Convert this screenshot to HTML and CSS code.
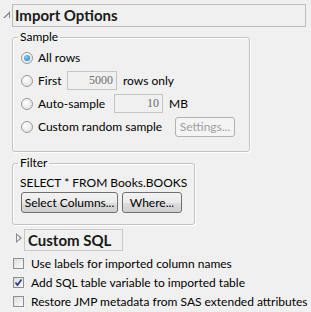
FILE: index.html
```html
<!DOCTYPE html>
<html lang="en">
<head>
    <meta charset="UTF-8">
    <title>Import Options</title>
    <link rel="stylesheet" href="styles.css">
</head>
<body>
    <div class="panel">
        <div class="outline-head">
            <span class="tri-open"></span>
            <div class="title-box">Import Options</div>
        </div>
        <div class="outline-body">
            <fieldset class="group sample">
                <legend>Sample</legend>
                <div class="row">
                    <span class="radio on"></span>
                    <span class="lbl">All rows</span>
                </div>
                <div class="row">
                    <span class="radio"></span>
                    <span class="lbl lbl-first">First</span>
                    <span class="num first-num">5000</span>
                    <span class="lbl">rows only</span>
                </div>
                <div class="row">
                    <span class="radio"></span>
                    <span class="lbl lbl-auto">Auto-sample</span>
                    <span class="num auto-num">10</span>
                    <span class="lbl">MB</span>
                </div>
                <div class="row">
                    <span class="radio"></span>
                    <span class="lbl lbl-custom">Custom random sample</span>
                    <span class="btn disabled">Settings...</span>
                </div>
            </fieldset>

            <fieldset class="group filter">
                <legend>Filter</legend>
                <div class="sql-text">SELECT * FROM Books.BOOKS</div>
                <div class="btn-row">
                    <span class="btn btn-cols">Select Columns...</span>
                    <span class="btn btn-where">Where...</span>
                </div>
            </fieldset>

            <div class="sub-head">
                <span class="tri-closed"></span>
                <div class="sub-box">Custom SQL</div>
            </div>

            <div class="checks">
                <div class="check-row">
                    <span class="check"></span>
                    <span class="lbl">Use labels for imported column names</span>
                </div>
                <div class="check-row">
                    <span class="check">
                        <svg width="9" height="9" viewBox="0 0 9 9"><path d="M1.5 4.5 L3.5 7 L7.5 1.5" fill="none" stroke="#2b3d8c" stroke-width="1.7"/></svg>
                    </span>
                    <span class="lbl">Add SQL table variable to imported table</span>
                </div>
                <div class="check-row">
                    <span class="check"></span>
                    <span class="lbl">Restore JMP metadata from SAS extended attributes</span>
                </div>
            </div>
        </div>
    </div>
</body>
</html>
```

FILE: styles.css
```css
* {
    margin: 0;
    padding: 0;
    box-sizing: border-box;
}
body {
    background: #f0f0f0;
    font-family: Lato, "Liberation Sans", sans-serif;
    font-size: 12px;
    color: #000;
    width: 311px;
    height: 312px;
    overflow: hidden;
    white-space: nowrap;
}
.panel {
    padding-top: 4px;
}
.outline-head {
    display: flex;
    align-items: center;
}
.tri-open {
    width: 12px;
    height: 23px;
    position: relative;
}
.tri-open::before {
    content: "";
    position: absolute;
    left: 3px;
    top: 7px;
    width: 0;
    height: 0;
    border-left: 7px solid transparent;
    border-bottom: 7px solid #8a8a8a;
}
.tri-open::after {
    content: "";
    position: absolute;
    left: 5px;
    top: 10px;
    width: 0;
    height: 0;
    border-left: 4px solid transparent;
    border-bottom: 4px solid #f0f0f0;
}
.title-box {
    width: 294px;
    height: 23px;
    border: 1px solid #bdbdbd;
    font-weight: bold;
    font-size: 15px;
    line-height: 21px;
    padding-left: 2px;
    color: #1a1a1a;
}
.outline-body {
    padding-left: 12px;
}
.group {
    border: 1px solid #c2c2c2;
    border-radius: 3px;
    box-shadow: inset 1px 1px 0 #fff, 1px 1px 0 #fff;
    padding: 0 7px;
}
.group legend {
    padding: 0 2px;
    margin-left: -2px;
    line-height: 16px;
}
.sample {
    width: 238px;
    margin-top: 2px;
    padding-top: 1px;
    padding-bottom: 13px;
}
.row {
    display: flex;
    align-items: center;
    height: 23px;
}
.radio {
    flex: none;
    width: 12px;
    height: 12px;
    border-radius: 50%;
    border: 1px solid #9a9a9a;
    background: radial-gradient(circle at 40% 35%, #fff, #dcdcdc);
    margin: 0 5px 0 1px;
    position: relative;
}
.radio.on::after {
    content: "";
    position: absolute;
    left: 2px;
    top: 2px;
    width: 6px;
    height: 6px;
    border-radius: 50%;
    background: radial-gradient(circle at 40% 35%, #7fd3ff, #1a74b8);
}
.lbl {
    flex: none;
}
.lbl-first {
    width: 20px;
}
.lbl-auto {
    width: 66px;
}
.lbl-custom {
    width: 127px;
}
.num {
    flex: none;
    display: block;
    height: 19px;
    border: 1px solid #c4c4c4;
    background: #f0f0f0;
    color: #6d6d6d;
    font-family: "Liberation Serif", serif;
    font-size: 12px;
    line-height: 17px;
    text-align: right;
    padding-right: 3px;
    margin-right: 6px;
}
.first-num {
    width: 50px;
    margin-left: 9px;
}
.auto-num {
    width: 49px;
    margin-left: 10px;
}
.btn {
    flex: none;
    display: inline-block;
    height: 21px;
    border: 1px solid #707070;
    border-radius: 3px;
    background: linear-gradient(#f2f2f2, #ebebeb 50%, #dddddd 51%, #cfcfcf);
    line-height: 19px;
    text-align: center;
}
.btn.disabled {
    width: 60px;
    height: 20px;
    line-height: 18px;
    margin-left: 10px;
    border-color: #adb2b5;
    background: #f4f4f4;
    color: #a0a0a0;
}
.filter {
    width: 179px;
    margin-top: 3px;
    padding-top: 3px;
    padding-bottom: 11px;
}
.sql-text {
    line-height: 18px;
}
.btn-row {
    display: flex;
    gap: 4px;
    margin-left: 1px;
}
.btn-cols {
    width: 97px;
}
.btn-where {
    width: 60px;
}
.sub-head {
    display: flex;
    align-items: center;
    margin-top: 4px;
}
.tri-closed {
    width: 12px;
    height: 22px;
    position: relative;
}
.tri-closed::before {
    content: "";
    position: absolute;
    left: 4px;
    top: 4px;
    border-top: 5px solid transparent;
    border-bottom: 5px solid transparent;
    border-left: 6px solid #8a8a8a;
}
.tri-closed::after {
    content: "";
    position: absolute;
    left: 5px;
    top: 6px;
    border-top: 3px solid transparent;
    border-bottom: 3px solid transparent;
    border-left: 3px solid #f0f0f0;
}
.sub-box {
    width: 99px;
    height: 22px;
    border: 1px solid #c8c8c8;
    font-weight: bold;
    font-size: 15px;
    line-height: 20px;
    padding-left: 3px;
    color: #1a1a1a;
}
.checks {
    margin-top: 3px;
}
.check-row {
    display: flex;
    align-items: center;
    height: 19px;
}
.check {
    flex: none;
    width: 11px;
    height: 11px;
    border: 1px solid #8f8f8f;
    background: linear-gradient(135deg, #dcdcdc, #fbfbfb);
    margin: 0 7px 0 1px;
    display: flex;
    align-items: center;
    justify-content: center;
}
```
